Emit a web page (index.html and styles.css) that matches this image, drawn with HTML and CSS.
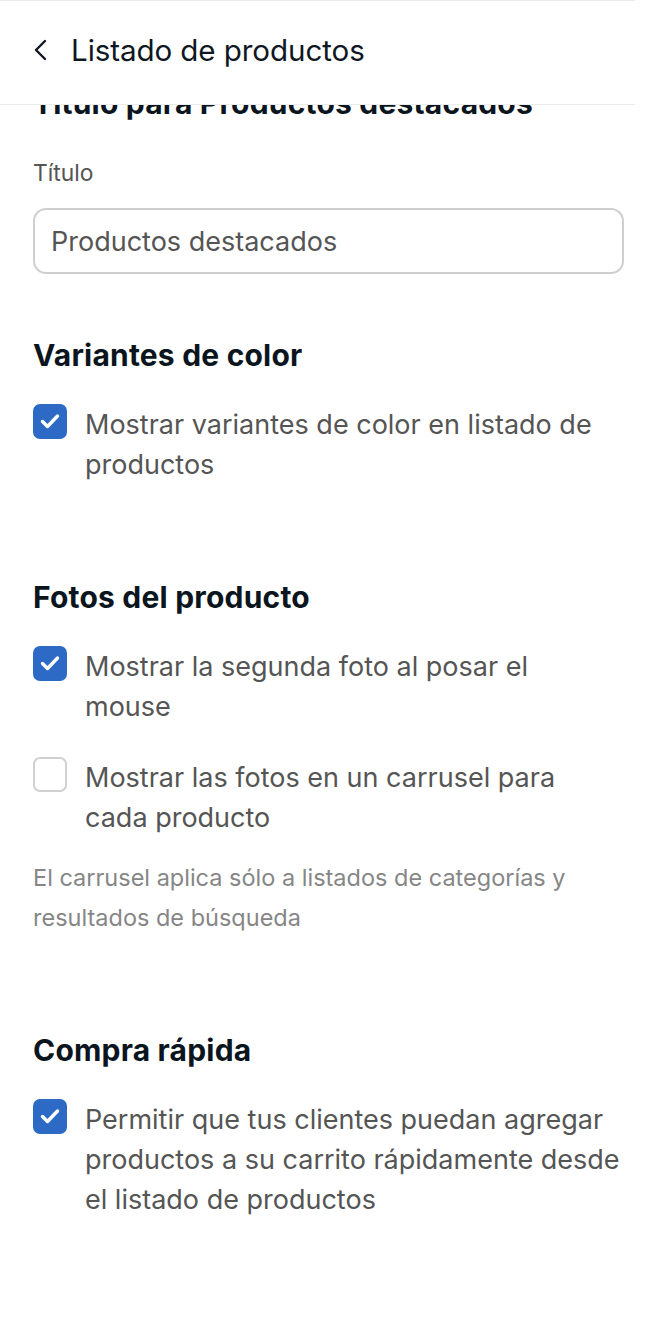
FILE: index.html
```html
<!DOCTYPE html>
<html lang="es">
<head>
<meta charset="utf-8">
<link rel="stylesheet" href="styles.css">
</head>
<body>
<header class="topbar">
  <svg class="back" width="16" height="24" viewBox="0 0 16 24"><path d="M13 3 L4 12 L13 21" fill="none" stroke="#0f1722" stroke-width="2.4" stroke-linecap="round" stroke-linejoin="round"/></svg>
  <span class="topbar-title">Listado de productos</span>
</header>
<main class="content">
  <h2 class="heading">Título para Productos destacados</h2>
  <label class="field-label">Título</label>
  <div class="input">Productos destacados</div>

  <h2 class="heading section">Variantes de color</h2>
  <div class="check-row">
    <span class="box checked"><svg viewBox="0 0 34 34" width="34" height="34"><path d="M9.5 17.5 L14.5 22.5 L24.5 12" fill="none" stroke="#fff" stroke-width="3.4" stroke-linecap="round" stroke-linejoin="round"/></svg></span>
    <span class="check-text">Mostrar variantes de color en listado de productos</span>
  </div>

  <h2 class="heading section-far">Fotos del producto</h2>
  <div class="check-row">
    <span class="box checked"><svg viewBox="0 0 34 34" width="34" height="34"><path d="M9.5 17.5 L14.5 22.5 L24.5 12" fill="none" stroke="#fff" stroke-width="3.4" stroke-linecap="round" stroke-linejoin="round"/></svg></span>
    <span class="check-text">Mostrar la segunda foto al posar el mouse</span>
  </div>
  <div class="check-row">
    <span class="box"></span>
    <span class="check-text">Mostrar las fotos en un carrusel para cada producto</span>
  </div>
  <p class="help">El carrusel aplica sólo a listados de categorías y resultados de búsqueda</p>

  <h2 class="heading section-far">Compra rápida</h2>
  <div class="check-row">
    <span class="box checked"><svg viewBox="0 0 34 34" width="34" height="34"><path d="M9.5 17.5 L14.5 22.5 L24.5 12" fill="none" stroke="#fff" stroke-width="3.4" stroke-linecap="round" stroke-linejoin="round"/></svg></span>
    <span class="check-text">Permitir que tus clientes puedan agregar productos a su carrito rápidamente desde el listado de productos</span>
  </div>
</main>
</body>
</html>
```
FILE: styles.css
```css
* { box-sizing: border-box; }
html, body { margin: 0; padding: 0; background: #fff; }
body { font-family: Inter, "Noto Sans", sans-serif; width: 654px; height: 1338px; overflow: hidden; }

.topbar {
  position: fixed;
  top: 0; left: 0;
  width: 635px;
  height: 105px;
  background: #fff;
  border-top: 1px solid #ececec;
  border-bottom: 1px solid #ececec;
  display: flex;
  align-items: center;
  padding-left: 32px;
  padding-bottom: 6px;
  z-index: 2;
}
.back { margin-right: 23px; }
.topbar-title { font-size: 29.6px; line-height: 36px; color: #0f1722; letter-spacing: -0.1px; }

.content { padding: 85px 30px 0 33px; }

.heading {
  margin: 0;
  font-size: 30px;
  line-height: 36px;
  font-weight: 700;
  color: #0b1520;
  letter-spacing: 0.2px;
}
.section { margin-top: 63px; }
.section-far { margin-top: 94px; }

.field-label {
  display: block;
  margin-top: 38px;
  font-size: 22.8px;
  line-height: 28px;
  color: #555;
}
.input {
  margin-top: 21px;
  height: 66px;
  border: 2px solid #cfcfcf;
  border-radius: 13px;
  display: flex;
  align-items: center;
  padding-left: 16px;
  font-size: 27px;
  color: #555;
}

.check-row {
  display: flex;
  align-items: flex-start;
  gap: 18px;
  margin-top: 31px;
}
.heading + .check-row { margin-top: 32px; }
.box {
  flex: none;
  width: 34px;
  height: 35px;
  margin-top: -1px;
  border-radius: 7px;
  border: 2px solid #d0d0d0;
  background: #fff;
}
.box.checked { background: #2d6ac6; border: none; }
.box svg { display: block; }
.check-text {
  width: 535px;
  font-size: 27px;
  line-height: 40px;
  color: #555;
}
.help {
  margin: 20px 0 0;
  font-size: 23.5px;
  line-height: 40px;
  color: #868686;
}
```
